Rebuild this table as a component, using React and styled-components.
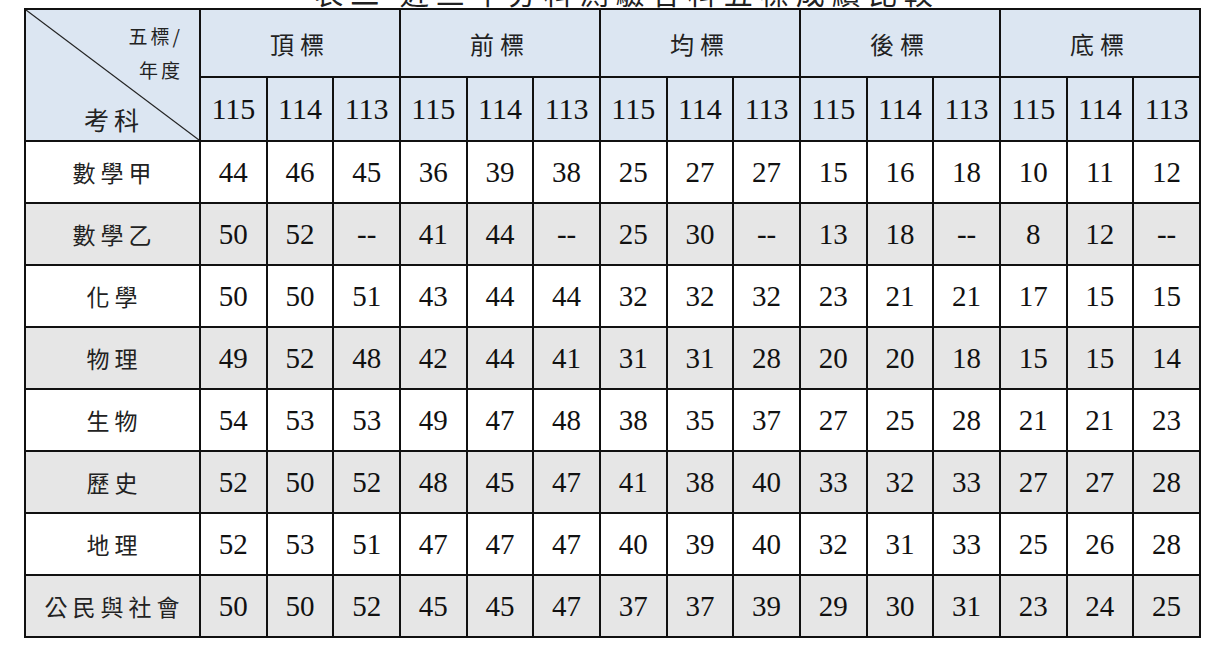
import React from "react";
import styled, { createGlobalStyle } from "styled-components";

const GlobalStyle = createGlobalStyle`
  html, body {
    margin: 0;
    padding: 0;
    background: #ffffff;
  }
  body {
    font-family: "Liberation Serif", "Noto Sans CJK TC", serif;
    color: #111;
  }
`;

const Page = styled.div`
  width: 1220px;
  height: 657px;
  overflow: hidden;
  padding-left: 24px;
  box-sizing: border-box;
`;

const TitleClip = styled.div`
  height: 8px;
  overflow: hidden;
  width: 1176px;
`;

const Title = styled.div`
  margin-top: -24px;
  padding-left: 30px;
  text-align: center;
  font-family: "Noto Sans CJK TC", sans-serif;
  font-size: 29px;
  letter-spacing: 7px;
  line-height: 32px;
  color: #222;
`;

const Table = styled.table`
  border-collapse: collapse;
  table-layout: fixed;
  width: 1177px;
  border: 2px solid #111;
`;

const HeadRow = styled.tr`
  background: #dce6f2;
  height: ${(p) => p.$h}px;
`;

const BodyRow = styled.tr`
  background: ${(p) => (p.$shade ? "#e6e6e6" : "#ffffff")};
  height: 62px;
`;

const Corner = styled.th`
  position: relative;
  padding: 0;
  border: 2px solid #111;
  font-weight: normal;
  vertical-align: top;
`;

const CornerInner = styled.div`
  position: relative;
  height: 130px;
  display: flex;
  flex-direction: column;
  font-family: "Noto Sans CJK TC", sans-serif;
  color: #222;
`;

const Diagonal = styled.svg`
  position: absolute;
  inset: 0;
  width: 100%;
  height: 100%;
`;

const CornerRight = styled.div`
  align-self: flex-end;
  padding-right: 16px;
  font-size: ${(p) => p.$size}px;
  line-height: ${(p) => p.$lh}px;
  letter-spacing: 3px;
  margin-top: ${(p) => p.$top}px;
`;

const CornerLeft = styled.div`
  align-self: flex-start;
  padding-left: 58px;
  margin-top: auto;
  margin-bottom: 6px;
  font-size: 25px;
  line-height: 30px;
  letter-spacing: 5px;
`;

const Group = styled.th`
  border: 2px solid #111;
  font-family: "Noto Sans CJK TC", sans-serif;
  font-weight: normal;
  font-size: 24px;
  letter-spacing: 6px;
  color: #222;
  padding: 0;
`;

const Year = styled.th`
  border: 2px solid #111;
  font-family: "Liberation Serif", "Times New Roman", "DejaVu Serif", serif;
  font-weight: normal;
  font-size: 30px;
  color: #111;
  padding: 0;
`;

const Subject = styled.td`
  border: 2px solid #111;
  text-align: center;
  font-family: "Noto Sans CJK TC", sans-serif;
  font-size: 23px;
  letter-spacing: 5px;
  color: #222;
  padding: 0 0 0 4px;
`;

const Num = styled.td`
  border: 2px solid #111;
  text-align: center;
  font-family: "Liberation Serif", "Times New Roman", "DejaVu Serif", serif;
  font-size: 29px;
  color: #111;
  padding: 0;
`;

const groups = ["頂標", "前標", "均標", "後標", "底標"];
const years = ["115", "114", "113"];

const rows = [
  ["數學甲", "44 46 45 36 39 38 25 27 27 15 16 18 10 11 12"],
  ["數學乙", "50 52 -- 41 44 -- 25 30 -- 13 18 -- 8 12 --"],
  ["化學", "50 50 51 43 44 44 32 32 32 23 21 21 17 15 15"],
  ["物理", "49 52 48 42 44 41 31 31 28 20 20 18 15 15 14"],
  ["生物", "54 53 53 49 47 48 38 35 37 27 25 28 21 21 23"],
  ["歷史", "52 50 52 48 45 47 41 38 40 33 32 33 27 27 28"],
  ["地理", "52 53 51 47 47 47 40 39 40 32 31 33 25 26 28"],
  ["公民與社會", "50 50 52 45 45 47 37 37 39 29 30 31 23 24 25"],
];

export default function App() {
  return (
    <Page>
      <GlobalStyle />
      <TitleClip>
        <Title>表二 近三年分科測驗各科五標成績比較</Title>
      </TitleClip>
      <Table>
        <colgroup>
          <col style={{ width: 175 }} />
          {Array.from({ length: 15 }).map((_, i) => (
            <col key={i} />
          ))}
        </colgroup>
        <thead>
          <HeadRow $h={68}>
            <Corner rowSpan={2}>
              <CornerInner>
                <Diagonal viewBox="0 0 100 100" preserveAspectRatio="none">
                  <line x1="0" y1="0" x2="100" y2="100" stroke="#222" strokeWidth="1.2" vectorEffect="non-scaling-stroke" />
                </Diagonal>
                <CornerRight $size={19} $lh={24} $top={14}>五標/</CornerRight>
                <CornerRight $size={19} $lh={24} $top={10}>年度</CornerRight>
                <CornerLeft>考科</CornerLeft>
              </CornerInner>
            </Corner>
            {groups.map((g) => (
              <Group key={g} colSpan={3}>
                {g}
              </Group>
            ))}
          </HeadRow>
          <HeadRow $h={64}>
            {groups.map((g) =>
              years.map((y) => <Year key={g + y}>{y}</Year>)
            )}
          </HeadRow>
        </thead>
        <tbody>
          {rows.map(([name, vals], i) => (
            <BodyRow key={name} $shade={i % 2 === 1}>
              <Subject>{name}</Subject>
              {vals.split(" ").map((v, j) => (
                <Num key={j}>{v}</Num>
              ))}
            </BodyRow>
          ))}
        </tbody>
      </Table>
    </Page>
  );
}
